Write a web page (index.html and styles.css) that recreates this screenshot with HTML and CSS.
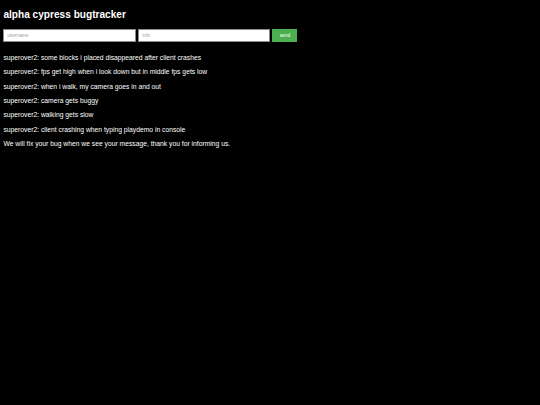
FILE: index.html
```html
<!DOCTYPE html>
<html>
<head>
<meta charset="utf-8">
<title>alpha cypress bugtracker</title>
<link rel="stylesheet" href="styles.css">
</head>
<body>
<h2 class="title">alpha cypress bugtracker</h2>
<form class="bug-form">
  <input class="field" type="text" placeholder="username">
  <input class="field field-info" type="text" placeholder="info">
  <button class="send" type="button">send</button>
</form>
<div class="messages">
  <p class="msg">superover2: some blocks i placed disappeared after client crashes</p>
  <p class="msg">superover2: fps get high when i look down but in middle fps gets low</p>
  <p class="msg">superover2: when i walk, my camera goes in and out</p>
  <p class="msg">superover2: camera gets buggy</p>
  <p class="msg">superover2: walking gets slow</p>
  <p class="msg">superover2: client crashing when typing playdemo in console</p>
  <p class="msg">We will fix your bug when we see your message, thank you for informing us.</p>
</div>
</body>
</html>
```

FILE: styles.css
```css
html, body {
  background: #000;
}
body {
  margin: 0;
  padding: 0 3.4px;
  color: #fff;
  font-family: "Liberation Sans", Arial, sans-serif;
  font-size: 6.75px;
}
.title {
  font-size: 10.125px;
  font-weight: bold;
  margin: 8.8px 0 9.6px;
  line-height: normal;
}
.bug-form {
  display: flex;
  gap: 2px;
  margin: 0;
  height: 12.4px;
}
.field {
  box-sizing: border-box;
  width: 133px;
  height: 12.4px;
  margin: 0;
  padding: 0 2.8px;
  border: 1px solid #8a8a8a;
  background: #fff;
  font-family: "Liberation Sans", Arial, sans-serif;
  font-size: 4.8px;
  color: #000;
  outline: none;
}
.field-info {
  width: 132px;
}
.field::placeholder {
  color: #a0a0a0;
}
.send {
  box-sizing: border-box;
  width: 25px;
  height: 12.4px;
  margin: 0;
  padding: 0;
  border: none;
  background: #4caf50;
  color: #fff;
  font-family: "Liberation Sans", Arial, sans-serif;
  font-size: 4.8px;
}
.messages {
  margin-top: 12px;
}
.msg {
  margin: 0 0 6.4px;
  line-height: 8px;
}
```
